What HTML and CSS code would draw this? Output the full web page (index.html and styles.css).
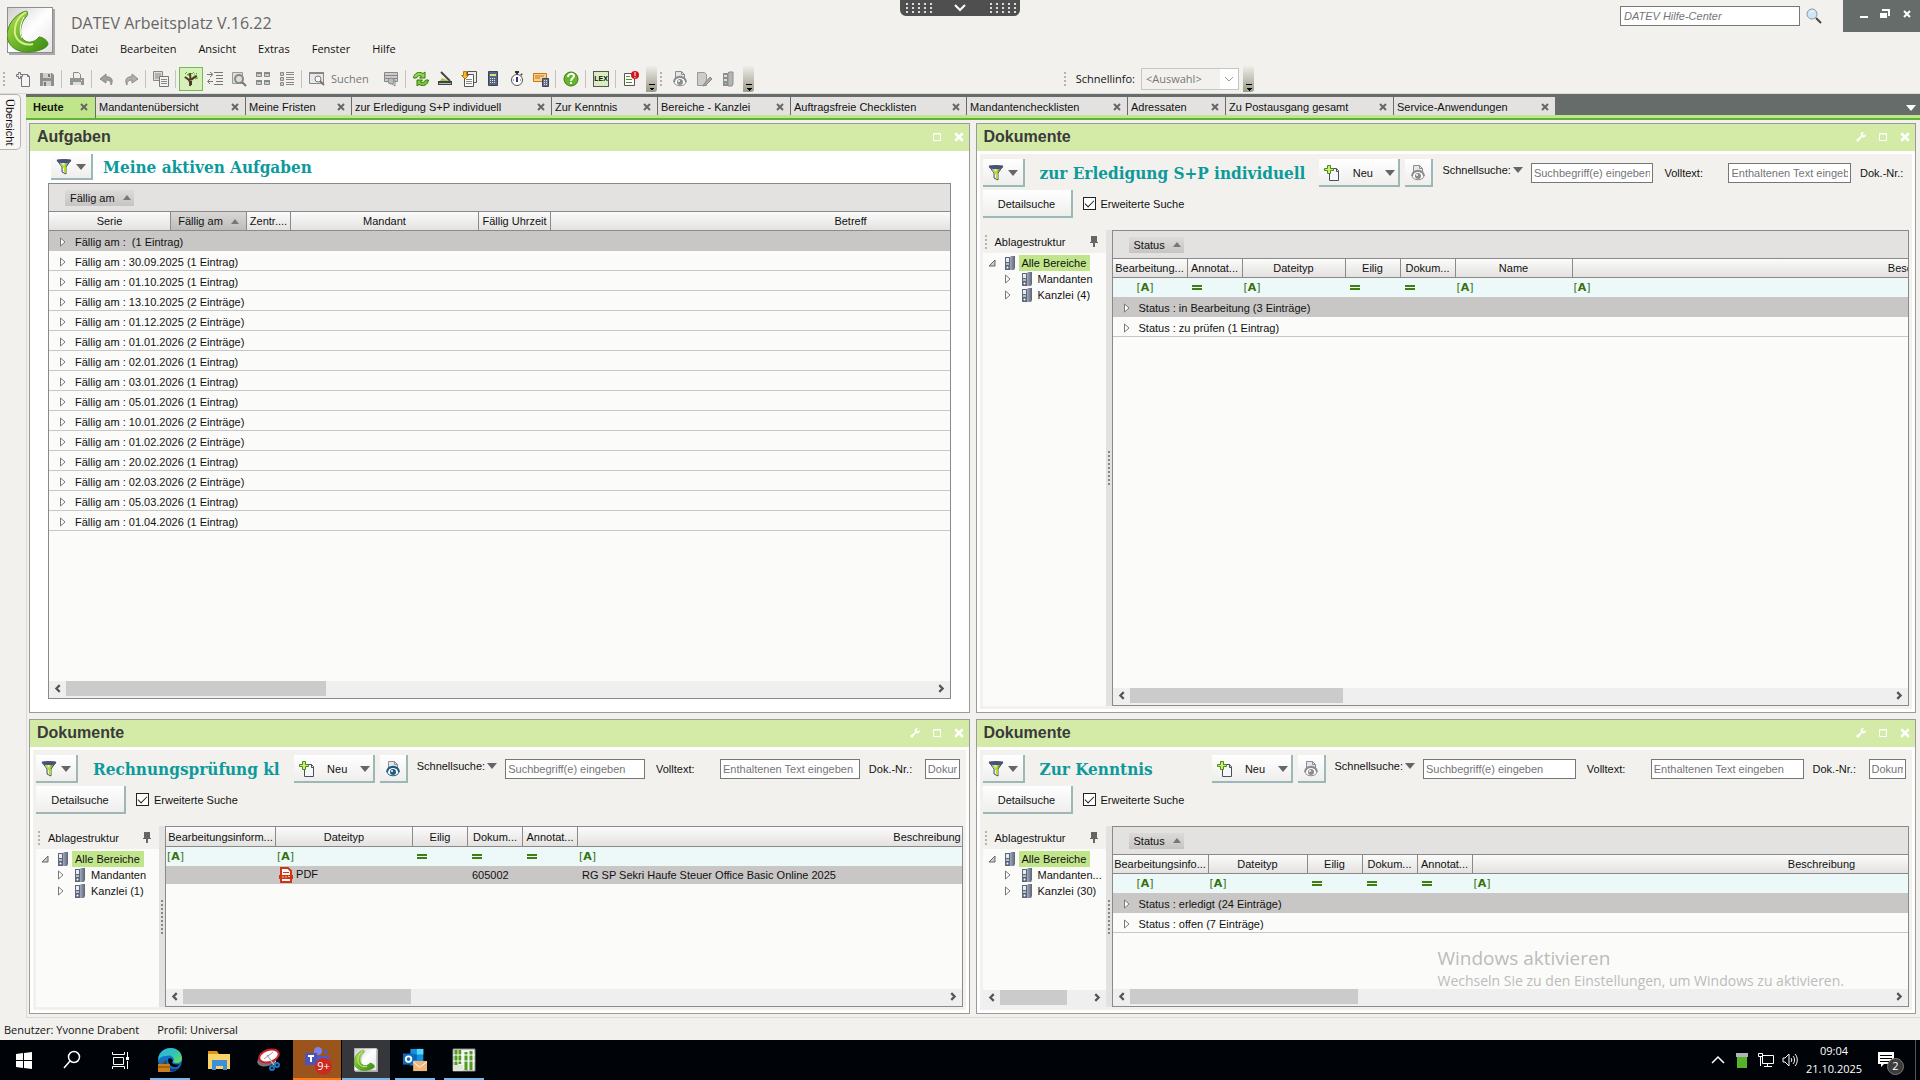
FILE: index.html
```html
<!DOCTYPE html>
<html lang="de">
<head>
    <meta charset="UTF-8">
    <meta name="viewport" content="width=device-width, initial-scale=1.0">
    <title>DATEV Arbeitsplatz V.16.22</title>
    <link rel="stylesheet" href="styles.css">
</head>
<body>
    <!-- Icon sprite -->
    <svg class="sprite" aria-hidden="true">
        <defs>
            <linearGradient id="greenGrad" x1="0" y1="0" x2="1" y2="1">
                <stop offset="0" stop-color="#b9dd52"/><stop offset="0.5" stop-color="#6db52a"/><stop offset="1" stop-color="#3c8a12"/>
            </linearGradient>
            <linearGradient id="paperGrad" x1="0" y1="0" x2="1" y2="1">
                <stop offset="0" stop-color="#cfcfcf"/><stop offset="0.5" stop-color="#ffffff"/><stop offset="1" stop-color="#e4e4e4"/>
            </linearGradient>
            <linearGradient id="funnelGrad" x1="0" y1="0" x2="1" y2="0">
                <stop offset="0" stop-color="#4c5578"/><stop offset="0.45" stop-color="#f2f4f8"/><stop offset="0.6" stop-color="#a6cf2c"/><stop offset="1" stop-color="#39424f"/>
            </linearGradient>
            <linearGradient id="binderGrad" x1="0" y1="0" x2="1" y2="0">
                <stop offset="0" stop-color="#a3abbb"/><stop offset="1" stop-color="#5b6377"/>
            </linearGradient>
            <linearGradient id="edgeGrad" x1="0" y1="0" x2="1" y2="1">
                <stop offset="0" stop-color="#2bb6e6"/><stop offset="0.5" stop-color="#2fc3b8"/><stop offset="1" stop-color="#6fe04c"/>
            </linearGradient>
        </defs>
        <symbol id="logo" viewBox="0 0 48 48">
            <rect x="2" y="2" width="46" height="46" fill="#a9a9a9"/>
            <rect x="0" y="0" width="46" height="46" fill="#8e8e8e"/>
            <rect x="1" y="1" width="44" height="44" fill="url(#paperGrad)"/>
            <path d="M19 4C8 7 0 18 0 29C1 40 11 46 23 45C33 44 40 41 41 37C41 34 36 30 32 30C29 34 23 37 18 34C11 30 13 16 19 10C21 8 21 4 19 4Z" fill="url(#greenGrad)" stroke="#3f8a16"/>
            <path d="M19 5C11 10 7 18 8 27C10 35 18 39 26 37" fill="none" stroke="#d3ee8a" stroke-width="2"/>
            <path d="M17 10C13 17 12 25 15 31" fill="none" stroke="#fff" stroke-width="1"/>
        </symbol>
        <symbol id="new" viewBox="0 0 16 16">
            <path d="M6.5 3.5h6l2 2v10h-8z" fill="#f4f4f4" stroke="#777"/><path d="M12.5 3.5v2h2" fill="none" stroke="#777"/>
            <path d="M3.5 1.5h2v2h2v2h-2v2h-2v-2h-2v-2h2z" fill="#e9e9e9" stroke="#777"/>
        </symbol>
        <symbol id="newGreen" viewBox="0 0 16 16">
            <path d="M5.500 3.500h7l2 2v10h-9z" fill="#f6f7fa" stroke="#4a4f5c"/><path d="M12.500 3.500v3h2" fill="#ccd" stroke="#4a4f5c"/>
            <path d="M3.500 0.500h3v3h3v2h-3v3h-3v-3h-3v-2h3z" fill="#cdea7a" stroke="#4b8c12"/>
        </symbol>
        <symbol id="save" viewBox="0 0 16 16">
            <path d="M1 2h12l2 2v11H1z" fill="#8f8f8f"/><path d="M4 2h8v5H4zM4 10h8v5H4z" fill="#cfcfcf"/><path d="M9 3h2v3H9zM5 11h2v4H5z" fill="#777"/>
        </symbol>
        <symbol id="print" viewBox="0 0 16 16">
            <path d="M4.500 1.500h5l2 2v4h-7z" fill="#eee" stroke="#888"/><path d="M1 7h14v7H1z" fill="#949494"/><path d="M4 11h8v3H4z" fill="#ddd"/><path d="M12 9h1v1h-1z" fill="#eee"/>
        </symbol>
        <symbol id="undo" viewBox="0 0 16 16">
            <path d="M1 8l6-5v3c5-1 8 3 5 8c0-4-2-5-5-5v3z" fill="#a0a0a0" stroke="#8a8a8a"/>
        </symbol>
        <symbol id="redo" viewBox="0 0 16 16">
            <path d="M15 8L9 3v3c-5-1-8 3-5 8c0-4 2-5 5-5v3z" fill="#b0b0b0" stroke="#8a8a8a"/>
        </symbol>
        <symbol id="copy" viewBox="0 0 16 16">
            <path d="M0.500 0.500h9v9h-9z" fill="#ddd" stroke="#888"/><path d="M2 3h6M2 5h6M2 7h6" stroke="#888"/>
            <path d="M6.500 5.500h9v10h-9z" fill="#f2f2f2" stroke="#777"/><path d="M8 8.500h6M8 10.500h6M8 12.500h6" stroke="#888"/>
        </symbol>
        <symbol id="tree" viewBox="0 0 16 16">
            <path d="M7 15c1-3 0-4-1-6L2 6M7 9c1-2 0-4 0-7M8 9c2-2 3-3 6-4M8 10V14" fill="none" stroke="#4a3a28" stroke-width="2"/>
            <path d="M2 3l2-2M5 5l1-3M9 3l2-2M11 5l3-1M1 7l2-2M12 8l3-1M8 2l1 1M13 2l1 1M4 3l1 1M11 3h1" stroke="#5bb025" stroke-width="1"/>
        </symbol>
        <symbol id="indent" viewBox="0 0 16 16">
            <path d="M7 1.500h9M9 4.500h7M9 7.500h7M9 10.500h7M7 13.500h9" stroke="#777"/><path d="M0 3.500h5M3 1l3 2.500L3 6M6 10.500H1M3 8L0.500 10.500 3 13" fill="none" stroke="#777"/>
        </symbol>
        <symbol id="docZoom" viewBox="0 0 16 16">
            <path d="M1.500 1.500h10v11h-10z" fill="#ddd" stroke="#999"/><circle cx="8" cy="8" r="4" fill="#ddd" stroke="#888" stroke-width="2"/><path d="M11 11l4 4" stroke="#777" stroke-width="2"/>
        </symbol>
        <symbol id="tiles" viewBox="0 0 16 16">
            <path d="M1.500 1.500h5v4h-5zM9.500 1.500h5v4h-5zM1.500 9.500h5v4h-5zM9.500 9.500h5v4h-5z" fill="#ccc" stroke="#888"/><path d="M1 2h6M9 2h6M1 10h6M9 10h6" stroke="#888" stroke-width="2"/>
        </symbol>
        <symbol id="listing" viewBox="0 0 16 16">
            <path d="M1.500 1.500h3v3h-3zM1.500 6.500h3v3h-3zM1.500 11.500h3v3h-3z" fill="#ccc" stroke="#888"/><path d="M7 1.500h8M7 3.500h8M7 6.500h8M7 8.500h8M7 11.500h8M7 13.500h8" stroke="#888"/>
        </symbol>
        <symbol id="find" viewBox="0 0 16 16">
            <path d="M0.500 1.500h14v11h-14z" fill="#e8e8e8" stroke="#888"/><path d="M0 2h15" stroke="#888" stroke-width="2"/><circle cx="9" cy="8" r="3" fill="#f7f7f7" stroke="#777"/><path d="M11 10l4 4" stroke="#777" stroke-width="2"/>
        </symbol>
        <symbol id="stack" viewBox="0 0 16 16">
            <path d="M1.500 1.500h13v9h-13z" fill="#ccc" stroke="#888"/><path d="M2 4.500h13M2 7.500h13" stroke="#888"/><path d="M5 10l7 5V9z" fill="#eee" stroke="#888"/><circle cx="8" cy="10" r="3" fill="#bbb" stroke="#888"/>
        </symbol>
        <symbol id="refresh" viewBox="0 0 16 16">
            <path d="M0.500 7C1 2 6 0 10 2.500l2-1.500v6H6.500l2-2C6 4 4 5 3.500 7z" fill="#9ad34b" stroke="#2f7d0d"/><path d="M15.500 9C15 14 10 16 6 13.500L4 15V9h5.500l-2 2c2.500 1 4.500 0 5-2z" fill="#7dc43a" stroke="#2f7d0d"/>
        </symbol>
        <symbol id="scanner" viewBox="0 0 16 16">
            <path d="M4 1l9 9" stroke="#444" stroke-width="2"/><path d="M1 10h14v4H1z" fill="#3f4347"/><path d="M3 10l2-3 7 3z" fill="#9c3"/><path d="M2 12.500h12" stroke="#bbb"/>
        </symbol>
        <symbol id="docsDown" viewBox="0 0 16 16">
            <path d="M6.500 0.500h9v11h-9z" fill="#eee" stroke="#555"/><path d="M3.500 3.500h9v12h-9z" fill="#fff" stroke="#555"/><path d="M5 8.500h6M5 10.500h6M5 12.500h6" stroke="#888"/><path d="M2.500 0.500h3v4h2L4 8 0.500 4.500h2z" fill="#f5b92a" stroke="#b37a0b"/>
        </symbol>
        <symbol id="calc" viewBox="0 0 16 16">
            <path d="M3.500 0.500h9v14h-9z" fill="#59657f" stroke="#3c4457"/><path d="M5 3h6v2H5z" fill="#c4e68c"/><path d="M5 7.500h6M5 9.500h6M5 11.500h6" stroke="#dfe4ee" stroke-dasharray="1 1"/>
        </symbol>
        <symbol id="watch" viewBox="0 0 16 16">
            <path d="M6 1h4M8 1v3M12 3l1 1" stroke="#333" stroke-width="2"/><circle cx="8" cy="9" r="5.500" fill="#fff" stroke="#555"/><path d="M8 6v5" stroke="#223a8a" stroke-width="2"/><path d="M4 9h1M11 9h1" stroke="#c22"/>
        </symbol>
        <symbol id="mailCalc" viewBox="0 0 16 16">
            <path d="M0.500 2.500h13v8h-13z" fill="#f8d08a" stroke="#c77a16"/><path d="M2 5h9M2 7h5" stroke="#c77a16"/><path d="M9.500 7.500h6v8h-6z" fill="#68728c" stroke="#3c4457"/><path d="M11 9.500h4M11 11.500h4M11 13.500h4" stroke="#dfe4ee" stroke-dasharray="1 1"/>
        </symbol>
        <symbol id="help" viewBox="0 0 16 16">
            <circle cx="8" cy="8" r="7" fill="#69b52c" stroke="#3c7a18"/><path d="M5 6c0-4 6-4 6-1c0 2-3 2-3 5M8 11v2" fill="none" stroke="#fff" stroke-width="2"/>
        </symbol>
        <symbol id="alertDoc" viewBox="0 0 16 16">
            <path d="M1.500 2.500h10v12h-10z" fill="#fff" stroke="#555"/><path d="M3 5.500h4M3 8.500h6M3 11.500h6" stroke="#4e9a1e"/><circle cx="12" cy="4" r="4" fill="#d4141c"/><path d="M12 1v4M12 6v1" stroke="#fff" stroke-width="1"/>
        </symbol>
        <symbol id="eye" viewBox="0 0 16 16">
            <path d="M3.500 0.500h6l3 3v6h-9z" fill="#e4e6ea" stroke="#8a8d92"/><path d="M9.500 0.500v3h3" fill="none" stroke="#8a8d92"/>
            <path d="M2 11c1-6 11-6 12 0c-1 5-11 5-12 0z" fill="#fff" stroke="currentColor"/><path d="M2 11c1-7 11-7 12 0" fill="none" stroke="currentColor" stroke-width="2"/><circle cx="8" cy="11" r="3" fill="currentColor"/><circle cx="7" cy="10" r="1" fill="#fff"/>
        </symbol>
        <symbol id="editDoc" viewBox="0 0 16 16">
            <path d="M1.500 1.500h7l2 2v11h-9z" fill="#ccc" stroke="#999"/><path d="M8 13l6-7 2 2-6 6-3 1z" fill="#aaa" stroke="#888"/>
        </symbol>
        <symbol id="binderGray" viewBox="0 0 16 16">
            <path d="M3 2h5v13H3z" fill="#8d8d8d"/><path d="M8 2l1-1h4v12l-1 2H8z" fill="#b5b5b5" stroke="#8d8d8d"/><path d="M4 4h3v2H4zM4 8h3v2H4zM5 12h1v1H5z" fill="#ddd"/>
        </symbol>
        <symbol id="binder" viewBox="0 0 12 14">
            <path d="M1 1h5v13H1z" fill="#5d677c"/><path d="M2 2h3v4H2z" fill="#e8ebf1"/><path d="M2 7h3v2H2z" fill="#b5bccb"/><circle cx="3.500" cy="11.500" r="1" fill="#fff"/>
            <path d="M6 1l1-1h4v12l-1 2H6z" fill="url(#binderGrad)"/>
        </symbol>
        <symbol id="funnel" viewBox="0 0 16 16">
            <path d="M1 1h14L10 8v7l-4-2V8z" fill="url(#funnelGrad)" stroke="#4b5268"/><ellipse cx="8" cy="2" rx="7" ry="2" fill="#46517c"/><path d="M5 5l4 4v5" fill="none" stroke="#b3dc2e" stroke-width="2"/>
        </symbol>
        <symbol id="down" viewBox="0 0 10 6"><path d="M0 0h10L5 6z" fill="#666"/></symbol>
        <symbol id="up" viewBox="0 0 10 6"><path d="M0 6h10L5 0z" fill="#777"/></symbol>
        <symbol id="closed" viewBox="0 0 6 10"><path d="M0.500 1l4.500 4-4.500 4z" fill="#fff" stroke="#777"/></symbol>
        <symbol id="opened" viewBox="0 0 8 8"><path d="M1 7h6V1z" fill="#ccc" stroke="#666"/></symbol>
        <symbol id="cross" viewBox="0 0 8 8"><path d="M1 1l6 6M7 1L1 7" stroke="currentColor" stroke-width="2"/></symbol>
        <symbol id="maxi" viewBox="0 0 10 10"><path d="M1.500 1.500h7v7h-7zM1 2h8" fill="none" stroke="#fff"/></symbol>
        <symbol id="wrench" viewBox="0 0 10 10"><path d="M0 8L5 4C4 2 5 0 8 0L6.500 2 8 3.500 10 2C10 5 8 6 6 5L2 10z" fill="#fff"/></symbol>
        <symbol id="pin" viewBox="0 0 8 11"><path d="M1 0h6v6h1v1H5v4H3V7H0V6h1z" fill="#666"/></symbol>
        <symbol id="left" viewBox="0 0 8 8"><path d="M6 1L3 4l3 3" fill="none" stroke="#555" stroke-width="2"/></symbol>
        <symbol id="right" viewBox="0 0 8 8"><path d="M2 1l3 3-3 3" fill="none" stroke="#555" stroke-width="2"/></symbol>
        <symbol id="equal" viewBox="0 0 10 6"><path d="M0 1h10M0 4h10" stroke="#3f7f12" stroke-width="2"/></symbol>
        <symbol id="pdf" viewBox="0 0 14 16">
            <path d="M2 1h7l3 3v11H2z" fill="#fff" stroke="#cf3510" stroke-width="2"/><path d="M4 5.500h6" stroke="#cf3510"/><path d="M0 8h14v4H0z" fill="#cf3510"/><path d="M4 9v2M7 9v2M9 9.500h2" stroke="#f6c4b6"/>
        </symbol>
    </svg>

    <header class="app-header">
        <svg class="logo"><use href="#logo"/></svg>
        <div class="app-heading">
            <h1 class="app-title">DATEV Arbeitsplatz V.16.22</h1>
            <nav class="menu">
                <a href="#">Datei</a>
                <a href="#">Bearbeiten</a>
                <a href="#">Ansicht</a>
                <a href="#">Extras</a>
                <a href="#">Fenster</a>
                <a href="#">Hilfe</a>
            </nav>
        </div>
        <div class="help-search">
            <input type="text" placeholder="DATEV Hilfe-Center" aria-label="DATEV Hilfe-Center">
            <button class="icon-only" aria-label="Suchen">
                <svg class="icon" viewBox="0 0 16 16"><path d="M10 10l5 5" stroke="#444" stroke-width="2"/><circle cx="6" cy="6" r="5" fill="#cfe6f5" stroke="#8a98a5"/><path d="M4 5c1-2 2-2 4-2" stroke="#fff" fill="none"/></svg>
            </button>
        </div>
        <div class="window-controls">
            <button aria-label="Minimieren"><svg viewBox="0 0 10 10"><path d="M1 8h8" stroke="#fff" stroke-width="2"/></svg></button>
            <button aria-label="Verkleinern"><svg viewBox="0 0 10 10"><path d="M0 4h7v5H0z" fill="#fff"/><path d="M3 2V1h6v5H8" fill="none" stroke="#fff" stroke-width="2"/></svg></button>
            <button aria-label="Schließen"><svg viewBox="0 0 10 10"><path d="M2 2l6 6M8 2L2 8" stroke="#fff" stroke-width="2"/></svg></button>
        </div>
        <button class="session-bar" aria-label="Sitzungsleiste">
            <span class="dots"></span>
            <svg viewBox="0 0 12 8"><path d="M1 1l5 5 5-5" fill="none" stroke="#fff" stroke-width="2"/></svg>
            <span class="dots"></span>
        </button>
    </header>

    <div class="toolbar">
        <span class="grip"></span>
        <div class="tools">
            <button class="tool" aria-label="Neu"><svg><use href="#new"/></svg></button>
            <button class="tool" aria-label="Speichern"><svg><use href="#save"/></svg></button>
            <span class="sep"></span>
            <button class="tool" aria-label="Drucken"><svg><use href="#print"/></svg></button>
            <span class="sep"></span>
            <button class="tool" aria-label="Rückgängig"><svg><use href="#undo"/></svg></button>
            <button class="tool" aria-label="Wiederholen"><svg><use href="#redo"/></svg></button>
            <span class="sep"></span>
            <button class="tool" aria-label="Kopieren"><svg><use href="#copy"/></svg></button>
            <span class="sep"></span>
            <button class="tool tool-active" aria-label="Übersicht"><svg><use href="#tree"/></svg></button>
            <button class="tool" aria-label="Einrücken"><svg><use href="#indent"/></svg></button>
            <button class="tool" aria-label="Vorschau"><svg><use href="#docZoom"/></svg></button>
            <button class="tool" aria-label="Kacheln"><svg><use href="#tiles"/></svg></button>
            <button class="tool" aria-label="Liste"><svg><use href="#listing"/></svg></button>
            <span class="sep"></span>
            <button class="tool tool-text"><svg><use href="#find"/></svg>Suchen</button>
            <button class="tool" aria-label="Suche speichern"><svg><use href="#stack"/></svg></button>
            <span class="sep"></span>
            <button class="tool" aria-label="Aktualisieren"><svg><use href="#refresh"/></svg></button>
            <button class="tool" aria-label="Scannen"><svg><use href="#scanner"/></svg></button>
            <button class="tool" aria-label="Ablegen"><svg><use href="#docsDown"/></svg></button>
            <button class="tool" aria-label="Rechner"><svg><use href="#calc"/></svg></button>
            <button class="tool" aria-label="Stoppuhr"><svg><use href="#watch"/></svg></button>
            <button class="tool" aria-label="Leistung"><svg><use href="#mailCalc"/></svg></button>
            <span class="sep"></span>
            <button class="tool" aria-label="Hilfe"><svg><use href="#help"/></svg></button>
            <span class="sep"></span>
            <button class="tool lex" aria-label="Lexinform"><span>LEX</span></button>
            <span class="sep"></span>
            <button class="tool" aria-label="Hinweise"><svg><use href="#alertDoc"/></svg></button>
        </div>
        <button class="cap" aria-label="Weitere Symbole"></button>
        <span class="grip"></span>
        <div class="tools">
            <button class="tool gray" aria-label="Ansehen"><svg><use href="#eye"/></svg></button>
            <button class="tool" aria-label="Bearbeiten"><svg><use href="#editDoc"/></svg></button>
            <button class="tool" aria-label="Ordner"><svg><use href="#binderGray"/></svg></button>
        </div>
        <button class="cap" aria-label="Weitere Symbole"></button>
        <div class="quick-info">
            <span class="grip"></span>
            <label for="quickInfo">Schnellinfo:</label>
            <div class="select-box">
                <select id="quickInfo" disabled><option>&lt;Auswahl&gt;</option></select>
                <svg viewBox="0 0 10 6"><path d="M1 1l4 4 4-4" fill="none" stroke="#999"/></svg>
            </div>
            <button class="cap" aria-label="Weitere Symbole"></button>
        </div>
    </div>

    <div class="main">
        <aside class="rail"><button class="rail-tab">Übersicht</button></aside>
        <main class="workspace">
            <nav class="tabs">
                <a class="tab tab-active" href="#">Heute<svg><use href="#cross"/></svg></a>
                <a class="tab tab-m" href="#">Mandantenübersicht<svg><use href="#cross"/></svg></a>
                <a class="tab tab-s" href="#">Meine Fristen<svg><use href="#cross"/></svg></a>
                <a class="tab tab-xl" href="#">zur Erledigung S+P individuell<svg><use href="#cross"/></svg></a>
                <a class="tab tab-s" href="#">Zur Kenntnis<svg><use href="#cross"/></svg></a>
                <a class="tab tab-n" href="#">Bereiche - Kanzlei<svg><use href="#cross"/></svg></a>
                <a class="tab tab-l" href="#">Auftragsfreie Checklisten<svg><use href="#cross"/></svg></a>
                <a class="tab tab-w" href="#">Mandantenchecklisten<svg><use href="#cross"/></svg></a>
                <a class="tab tab-xs" href="#">Adressaten<svg><use href="#cross"/></svg></a>
                <a class="tab tab-l2" href="#">Zu Postausgang gesamt<svg><use href="#cross"/></svg></a>
                <a class="tab tab-w tab-last" href="#">Service-Anwendungen<svg><use href="#cross"/></svg></a>
                <button class="tab-more" aria-label="Weitere Register"><svg viewBox="0 0 10 6"><path d="M0 0h10L5 6z" fill="#fff"/></svg></button>
            </nav>

            <div class="panels">
                <!-- Aufgaben -->
                <section class="panel">
                    <header class="panel-bar">
                        <h2>Aufgaben</h2>
                        <button aria-label="Maximieren"><svg><use href="#maxi"/></svg></button>
                        <button aria-label="Schließen"><svg><use href="#cross"/></svg></button>
                    </header>
                    <div class="tasks">
                        <div class="tasks-head">
                            <button class="btn btn-flat" aria-label="Filter"><svg class="icon"><use href="#funnel"/></svg><svg class="arrow"><use href="#down"/></svg></button>
                            <h3>Meine aktiven Aufgaben</h3>
                        </div>
                        <div class="grid-box">
                            <div class="group-bar"><button class="chip">Fällig am<svg><use href="#up"/></svg></button></div>
                            <div class="grid-body">
                                <table class="grid tasks-grid">
                                    <colgroup><col class="c122"><col class="c76"><col class="c44"><col class="c188"><col class="c72"><col class="c600"></colgroup>
                                    <thead>
                                        <tr><th>Serie</th><th class="sorted">Fällig am<svg><use href="#up"/></svg></th><th>Zentr....</th><th>Mandant</th><th>Fällig Uhrzeit</th><th>Betreff</th></tr>
                                    </thead>
                                    <tbody>
                                        <tr class="group selected"><td colspan="6"><svg><use href="#closed"/></svg>Fällig am :&nbsp; (1 Eintrag)</td></tr>
                                        <tr class="group"><td colspan="6"><svg><use href="#closed"/></svg>Fällig am : 30.09.2025 (1 Eintrag)</td></tr>
                                        <tr class="group"><td colspan="6"><svg><use href="#closed"/></svg>Fällig am : 01.10.2025 (1 Eintrag)</td></tr>
                                        <tr class="group"><td colspan="6"><svg><use href="#closed"/></svg>Fällig am : 13.10.2025 (2 Einträge)</td></tr>
                                        <tr class="group"><td colspan="6"><svg><use href="#closed"/></svg>Fällig am : 01.12.2025 (2 Einträge)</td></tr>
                                        <tr class="group"><td colspan="6"><svg><use href="#closed"/></svg>Fällig am : 01.01.2026 (2 Einträge)</td></tr>
                                        <tr class="group"><td colspan="6"><svg><use href="#closed"/></svg>Fällig am : 02.01.2026 (1 Eintrag)</td></tr>
                                        <tr class="group"><td colspan="6"><svg><use href="#closed"/></svg>Fällig am : 03.01.2026 (1 Eintrag)</td></tr>
                                        <tr class="group"><td colspan="6"><svg><use href="#closed"/></svg>Fällig am : 05.01.2026 (1 Eintrag)</td></tr>
                                        <tr class="group"><td colspan="6"><svg><use href="#closed"/></svg>Fällig am : 10.01.2026 (2 Einträge)</td></tr>
                                        <tr class="group"><td colspan="6"><svg><use href="#closed"/></svg>Fällig am : 01.02.2026 (2 Einträge)</td></tr>
                                        <tr class="group"><td colspan="6"><svg><use href="#closed"/></svg>Fällig am : 20.02.2026 (1 Eintrag)</td></tr>
                                        <tr class="group"><td colspan="6"><svg><use href="#closed"/></svg>Fällig am : 02.03.2026 (2 Einträge)</td></tr>
                                        <tr class="group"><td colspan="6"><svg><use href="#closed"/></svg>Fällig am : 05.03.2026 (1 Eintrag)</td></tr>
                                        <tr class="group"><td colspan="6"><svg><use href="#closed"/></svg>Fällig am : 01.04.2026 (1 Eintrag)</td></tr>
                                    </tbody>
                                </table>
                            </div>
                            <div class="scrollbar"><svg><use href="#left"/></svg><div class="track"><div class="thumb thumb-tasks"></div></div><svg><use href="#right"/></svg></div>
                        </div>
                    </div>
                </section>

                <!-- Dokumente: zur Erledigung -->
                <section class="panel">
                    <header class="panel-bar">
                        <h2>Dokumente</h2>
                        <button aria-label="Einstellungen"><svg><use href="#wrench"/></svg></button>
                        <button aria-label="Maximieren"><svg><use href="#maxi"/></svg></button>
                        <button aria-label="Schließen"><svg><use href="#cross"/></svg></button>
                    </header>
                    <div class="docs">
                        <div class="search-row search-cut">
                            <button class="btn" aria-label="Filter"><svg class="icon"><use href="#funnel"/></svg><svg class="arrow"><use href="#down"/></svg></button>
                            <h3>zur Erledigung S+P individuell</h3>
                            <button class="btn btn-new"><svg class="icon"><use href="#newGreen"/></svg>Neu<svg class="arrow"><use href="#down"/></svg></button>
                            <button class="btn btn-eye gray" aria-label="Ansehen"><svg class="icon"><use href="#eye"/></svg></button>
                            <label class="quick-label" for="quick2">Schnellsuche: <svg class="arrow"><use href="#down"/></svg></label>
                            <input class="field" id="quick2" type="text" placeholder="Suchbegriff(e) eingeben">
                            <label class="full-label" for="full2">Volltext:</label>
                            <input class="field" id="full2" type="text" placeholder="Enthaltenen Text eingeben">
                            <span class="doc-label">Dok.-Nr.:</span>
                        </div>
                        <div class="detail-row">
                            <button class="btn btn-detail">Detailsuche</button>
                            <label class="check"><input type="checkbox" checked>Erweiterte Suche</label>
                        </div>
                        <div class="doc-body">
                            <aside class="filing">
                                <div class="filing-head"><span class="grip"></span>Ablagestruktur<svg><use href="#pin"/></svg></div>
                                <ul class="filing-tree">
                                    <li><svg class="twist"><use href="#opened"/></svg><svg class="binder"><use href="#binder"/></svg><span class="current">Alle Bereiche</span></li>
                                    <li class="child"><svg class="twist"><use href="#closed"/></svg><svg class="binder"><use href="#binder"/></svg><span>Mandanten</span></li>
                                    <li class="child"><svg class="twist"><use href="#closed"/></svg><svg class="binder"><use href="#binder"/></svg><span>Kanzlei (4)</span></li>
                                </ul>
                            </aside>
                            <div class="splitter"></div>
                            <div class="grid-box">
                                <div class="group-bar"><button class="chip">Status<svg><use href="#up"/></svg></button></div>
                                <div class="grid-body">
                                    <table class="grid open-grid">
                                        <colgroup><col class="c75"><col class="c55"><col class="c103"><col class="c55"><col class="c55"><col class="c117"><col class="c699"></colgroup>
                                        <thead>
                                            <tr><th>Bearbeitung...</th><th>Annotat...</th><th>Dateityp</th><th>Eilig</th><th>Dokum...</th><th>Name</th><th>Beschreibung</th></tr>
                                        </thead>
                                        <tbody>
                                            <tr class="filter indent"><td>[<b>A</b>]</td><td><svg><use href="#equal"/></svg></td><td>[<b>A</b>]</td><td><svg><use href="#equal"/></svg></td><td><svg><use href="#equal"/></svg></td><td>[<b>A</b>]</td><td>[<b>A</b>]</td></tr>
                                            <tr class="group selected"><td colspan="7"><svg><use href="#closed"/></svg>Status : in Bearbeitung (3 Einträge)</td></tr>
                                            <tr class="group"><td colspan="7"><svg><use href="#closed"/></svg>Status : zu prüfen (1 Eintrag)</td></tr>
                                        </tbody>
                                    </table>
                                </div>
                                <div class="scrollbar"><svg><use href="#left"/></svg><div class="track"><div class="thumb thumb-open"></div></div><svg><use href="#right"/></svg></div>
                            </div>
                        </div>
                    </div>
                </section>

                <!-- Dokumente: Rechnungsprüfung -->
                <section class="panel">
                    <header class="panel-bar">
                        <h2>Dokumente</h2>
                        <button aria-label="Einstellungen"><svg><use href="#wrench"/></svg></button>
                        <button aria-label="Maximieren"><svg><use href="#maxi"/></svg></button>
                        <button aria-label="Schließen"><svg><use href="#cross"/></svg></button>
                    </header>
                    <div class="docs">
                        <div class="search-row">
                            <button class="btn" aria-label="Filter"><svg class="icon"><use href="#funnel"/></svg><svg class="arrow"><use href="#down"/></svg></button>
                            <h3>Rechnungsprüfung kl</h3>
                            <button class="btn btn-new"><svg class="icon"><use href="#newGreen"/></svg>Neu<svg class="arrow"><use href="#down"/></svg></button>
                            <button class="btn btn-eye" aria-label="Ansehen"><svg class="icon"><use href="#eye"/></svg></button>
                            <label class="quick-label" for="quick3">Schnellsuche: <svg class="arrow"><use href="#down"/></svg></label>
                            <input class="field" id="quick3" type="text" placeholder="Suchbegriff(e) eingeben">
                            <label class="full-label" for="full3">Volltext:</label>
                            <input class="field" id="full3" type="text" placeholder="Enthaltenen Text eingeben">
                            <label class="doc-label" for="doc3">Dok.-Nr.:</label>
                            <input class="field field-doc" id="doc3" type="text" placeholder="Dokumentnummer">
                        </div>
                        <div class="detail-row">
                            <button class="btn btn-detail">Detailsuche</button>
                            <label class="check"><input type="checkbox" checked>Erweiterte Suche</label>
                        </div>
                        <div class="doc-body">
                            <aside class="filing">
                                <div class="filing-head"><span class="grip"></span>Ablagestruktur<svg><use href="#pin"/></svg></div>
                                <ul class="filing-tree">
                                    <li><svg class="twist"><use href="#opened"/></svg><svg class="binder"><use href="#binder"/></svg><span class="current">Alle Bereiche</span></li>
                                    <li class="child"><svg class="twist"><use href="#closed"/></svg><svg class="binder"><use href="#binder"/></svg><span>Mandanten</span></li>
                                    <li class="child"><svg class="twist"><use href="#closed"/></svg><svg class="binder"><use href="#binder"/></svg><span>Kanzlei (1)</span></li>
                                </ul>
                            </aside>
                            <div class="splitter"></div>
                            <div class="grid-box">
                                <div class="grid-body">
                                    <table class="grid check-grid">
                                        <colgroup><col class="c110"><col class="c137"><col class="c55"><col class="c55"><col class="c55"><col class="c699"></colgroup>
                                        <thead>
                                            <tr><th>Bearbeitungsinform...</th><th>Dateityp</th><th>Eilig</th><th>Dokum...</th><th>Annotat...</th><th>Beschreibung</th></tr>
                                        </thead>
                                        <tbody>
                                            <tr class="filter"><td>[<b>A</b>]</td><td>[<b>A</b>]</td><td><svg><use href="#equal"/></svg></td><td><svg><use href="#equal"/></svg></td><td><svg><use href="#equal"/></svg></td><td>[<b>A</b>]</td></tr>
                                            <tr class="entry selected"><td></td><td><svg><use href="#pdf"/></svg> PDF</td><td></td><td>605002</td><td></td><td>RG SP Sekri Haufe Steuer Office Basic Online 2025</td></tr>
                                        </tbody>
                                    </table>
                                </div>
                                <div class="scrollbar"><svg><use href="#left"/></svg><div class="track"><div class="thumb"></div></div><svg><use href="#right"/></svg></div>
                            </div>
                        </div>
                    </div>
                </section>

                <!-- Dokumente: Zur Kenntnis -->
                <section class="panel">
                    <header class="panel-bar">
                        <h2>Dokumente</h2>
                        <button aria-label="Einstellungen"><svg><use href="#wrench"/></svg></button>
                        <button aria-label="Maximieren"><svg><use href="#maxi"/></svg></button>
                        <button aria-label="Schließen"><svg><use href="#cross"/></svg></button>
                    </header>
                    <div class="docs">
                        <div class="search-row">
                            <button class="btn" aria-label="Filter"><svg class="icon"><use href="#funnel"/></svg><svg class="arrow"><use href="#down"/></svg></button>
                            <h3>Zur Kenntnis</h3>
                            <button class="btn btn-new"><svg class="icon"><use href="#newGreen"/></svg>Neu<svg class="arrow"><use href="#down"/></svg></button>
                            <button class="btn btn-eye gray" aria-label="Ansehen"><svg class="icon"><use href="#eye"/></svg></button>
                            <label class="quick-label" for="quick4">Schnellsuche: <svg class="arrow"><use href="#down"/></svg></label>
                            <input class="field" id="quick4" type="text" placeholder="Suchbegriff(e) eingeben">
                            <label class="full-label" for="full4">Volltext:</label>
                            <input class="field" id="full4" type="text" placeholder="Enthaltenen Text eingeben">
                            <label class="doc-label" for="doc4">Dok.-Nr.:</label>
                            <input class="field field-doc" id="doc4" type="text" placeholder="Dokumentnummer">
                        </div>
                        <div class="detail-row">
                            <button class="btn btn-detail">Detailsuche</button>
                            <label class="check"><input type="checkbox" checked>Erweiterte Suche</label>
                        </div>
                        <div class="doc-body">
                            <aside class="filing">
                                <div class="filing-head"><span class="grip"></span>Ablagestruktur<svg><use href="#pin"/></svg></div>
                                <ul class="filing-tree">
                                    <li><svg class="twist"><use href="#opened"/></svg><svg class="binder"><use href="#binder"/></svg><span class="current">Alle Bereiche</span></li>
                                    <li class="child"><svg class="twist"><use href="#closed"/></svg><svg class="binder"><use href="#binder"/></svg><span>Mandanten...</span></li>
                                    <li class="child"><svg class="twist"><use href="#closed"/></svg><svg class="binder"><use href="#binder"/></svg><span>Kanzlei (30)</span></li>
                                </ul>
                                <div class="scrollbar"><svg><use href="#left"/></svg><div class="track"><div class="thumb thumb-tree"></div></div><svg><use href="#right"/></svg></div>
                            </aside>
                            <div class="splitter"></div>
                            <div class="grid-box">
                                <div class="group-bar"><button class="chip">Status<svg><use href="#up"/></svg></button></div>
                                <div class="grid-body">
                                    <table class="grid info-grid">
                                        <colgroup><col class="c96"><col class="c99"><col class="c55"><col class="c55"><col class="c55"><col class="c699"></colgroup>
                                        <thead>
                                            <tr><th>Bearbeitungsinfo...</th><th>Dateityp</th><th>Eilig</th><th>Dokum...</th><th>Annotat...</th><th>Beschreibung</th></tr>
                                        </thead>
                                        <tbody>
                                            <tr class="filter indent"><td>[<b>A</b>]</td><td>[<b>A</b>]</td><td><svg><use href="#equal"/></svg></td><td><svg><use href="#equal"/></svg></td><td><svg><use href="#equal"/></svg></td><td>[<b>A</b>]</td></tr>
                                            <tr class="group selected"><td colspan="6"><svg><use href="#closed"/></svg>Status : erledigt (24 Einträge)</td></tr>
                                            <tr class="group"><td colspan="6"><svg><use href="#closed"/></svg>Status : offen (7 Einträge)</td></tr>
                                        </tbody>
                                    </table>
                                </div>
                                <div class="scrollbar"><svg><use href="#left"/></svg><div class="track"><div class="thumb"></div></div><svg><use href="#right"/></svg></div>
                            </div>
                        </div>
                    </div>
                </section>
            </div>
        </main>
    </div>

    <footer class="status">
        <span>Benutzer: Yvonne Drabent</span>
        <span>Profil: Universal</span>
    </footer>

    <div class="taskbar">
        <div class="start">
            <button class="task" aria-label="Start"><svg viewBox="0 0 24 24"><path d="M4 6l7-1v7H4zM12 5l8-1v8h-8zM4 13h7v7l-7-1zM12 13h8v8l-8-1z" fill="#fff"/></svg></button>
            <button class="task" aria-label="Suche"><svg viewBox="0 0 24 24"><circle cx="14" cy="9" r="5.500" fill="none" stroke="#fff" stroke-width="1.500"/><path d="M10 13l-6 7" stroke="#fff" stroke-width="1.500"/></svg></button>
            <button class="task" aria-label="Aktive Anwendungen"><svg viewBox="0 0 24 24"><path d="M5.500 9.500h10v7h-10zM4.500 4v2.500h12V4M4.500 21v-2.500h12V21M19.500 4v5M19.500 13v8" fill="none" stroke="#fff"/><path d="M18 9h3v3h-3z" fill="#fff"/></svg></button>
        </div>
        <button class="task running" aria-label="Edge">
            <svg viewBox="0 0 24 24"><circle cx="12" cy="12" r="12" fill="#1373c4"/><path d="M0 12C1-3 23-4 24 10c0 5-5 6-9 4c3-4-2-8-7-6C4 8 1 10 0 12z" fill="url(#edgeGrad)"/><path d="M9 12c-2 5 3 11 12 8c-4 5-13 4-15-2c-1-3 0-5 3-6z" fill="#0b3f8c"/><path d="M10 11c3-2 6 1 4 4c3 2 7 2 9 0l-4 4c-6 1-9-3-9-8z" fill="#000308"/><rect y="16" width="12" height="8" fill="#c97f1d"/><path d="M4 16v-2h4v2M0 19h12" stroke="#7b470b" fill="none"/></svg>
        </button>
        <button class="task" aria-label="Explorer">
            <svg viewBox="0 0 24 24"><path d="M1 3h9l2 3H1z" fill="#e0940c"/><path d="M1 6h22v15H1z" fill="#fbd268"/><path d="M5 12h15v10h-4v-4H9v4H5z" fill="#3d8fd6"/></svg>
        </button>
        <button class="task" aria-label="Snipping Tool">
            <svg viewBox="0 0 24 24"><ellipse cx="11" cy="12" rx="10" ry="6" transform="rotate(-18 11 12)" fill="#777"/><ellipse cx="13" cy="8" rx="10" ry="6" transform="rotate(-18 13 8)" fill="#fff" stroke="#d3202a" stroke-width="2"/><path d="M8 11l9-7M11 7l6 8" stroke="#999"/><path d="M13 11l7 8M20 13l-5 6" stroke="#ddd"/><circle cx="16" cy="20" r="2" fill="none" stroke="#1e78c2" stroke-width="2"/><circle cx="21" cy="17" r="2" fill="none" stroke="#1e78c2" stroke-width="2"/></svg>
        </button>
        <button class="task teams" aria-label="Teams">
            <svg viewBox="0 0 24 24"><circle cx="13" cy="4" r="4" fill="#7b83eb"/><circle cx="21" cy="5" r="2" fill="#5059c9"/><path d="M9 9h15v8c-2 5-13 6-15 0z" fill="#5059c9"/><path d="M0 6h12v12H0z" fill="#4b53bc"/><path d="M3 9h6M6 9v6" stroke="#fff" stroke-width="2"/></svg>
            <span class="badge">9+</span>
        </button>
        <button class="task running current-app" aria-label="DATEV"><svg><use href="#logo"/></svg></button>
        <button class="task running" aria-label="Outlook">
            <svg viewBox="0 0 26 26"><path d="M8 1h14v18H8z" fill="#1490df"/><path d="M15 1h7v6h-7z" fill="#50d9ff"/><path d="M8 7h7v6H8z" fill="#0364b8"/><path d="M0 6h12v12H0z" fill="#0f6cbd"/><circle cx="6" cy="12" r="3" fill="none" stroke="#fff" stroke-width="2"/><path d="M11 14h15v11H11z" fill="#f1b77a"/><path d="M11 15l7 6 8-6" fill="none" stroke="#fff"/></svg>
        </button>
        <button class="task running" aria-label="DATEV Rechnungswesen">
            <svg viewBox="0 0 24 24"><path d="M1 1h22v22H1z" fill="#f1f1ee" stroke="#888"/><path d="M4 2v20M8 2v14M14 4v18M19 3v19" stroke="#4f9a20" stroke-width="3"/><path d="M1 7h22M1 13h22M10 2v20" stroke="#fff"/><path d="M1 17h10v6H1z" fill="#dfe7d6"/></svg>
        </button>
        <div class="tray">
            <svg viewBox="0 0 16 16"><path d="M2 11l6-6 6 6" fill="none" stroke="#fff" stroke-width="1.500"/></svg>
            <svg viewBox="0 0 16 16"><path d="M3 4h10v12H3z" fill="#58b327"/><path d="M2 1h12v4H2z" fill="#aeb3bf"/></svg>
            <svg viewBox="0 0 16 16"><path d="M4.500 3.500h11v8h-11zM9.500 12v3M6 14.500h8M0.500 1.500h4v3h-4zM2.500 5v9" fill="none" stroke="#fff"/></svg>
            <svg viewBox="0 0 16 16"><path d="M1 6h2l4-4v12l-4-4H1zM9 6c1 1 1 3 0 4M11 4c2 2 2 6 0 8M13 2c3 3 3 9 0 12" fill="none" stroke="#fff"/></svg>
            <div class="clock"><span>09:04</span><span>21.10.2025</span></div>
            <button class="notes" aria-label="Benachrichtigungen">
                <svg viewBox="0 0 16 16"><path d="M0 0h16v12H6l-3 3v-3H0z" fill="#fff"/><path d="M2 3.500h12M2 6.500h12M2 9.500h9" stroke="#000"/></svg>
                <span class="count">2</span>
            </button>
        </div>
    </div>

    <div class="watermark">
        <p class="watermark-title">Windows aktivieren</p>
        <p>Wechseln Sie zu den Einstellungen, um Windows zu aktivieren.</p>
    </div>
</body>
</html>
```
FILE: styles.css
```css
* {
    box-sizing: border-box;
}

body {
    margin: 0;
    display: flex;
    flex-direction: column;
    height: 100vh;
    overflow: hidden;
    position: relative;
    background-color: #f3f1ee;
    color: #111;
    font-family: "Liberation Sans", Arial, sans-serif;
    font-size: 11px;
}

button, input, select {
    font: inherit;
    color: inherit;
}

button {
    padding: 0;
    border: none;
    background: none;
}

h1, h2, h3, p, ul {
    margin: 0;
    padding: 0;
}

a {
    color: inherit;
    text-decoration: none;
}

svg {
    display: block;
    flex: none;
}

.sprite {
    position: absolute;
    width: 0;
    height: 0;
}

.icon {
    width: 16px;
    height: 16px;
}

.arrow {
    width: 10px;
    height: 6px;
}

.gray {
    color: #8c8c8c;
}

.grip {
    width: 2px;
    height: 14px;
    background: repeating-linear-gradient(#b5b3b0 0 2px, transparent 2px 4px);
}

/* Header */
.app-header {
    display: flex;
    position: relative;
    height: 64px;
    padding-left: 7px;
}

.logo {
    width: 48px;
    height: 48px;
    margin-top: 7px;
}

.app-heading {
    flex: 1;
    margin-left: 16px;
    padding-top: 12px;
    font-family: "Open Sans", "Noto Sans", sans-serif;
}

.app-title {
    color: #666;
    font-size: 16px;
    font-weight: normal;
    line-height: 22px;
}

.menu {
    display: flex;
    gap: 22px;
    padding-top: 6px;
    line-height: 18px;
}

.help-search {
    display: flex;
    align-items: center;
    gap: 6px;
    height: 32px;
    margin-right: 21px;
}

.help-search input {
    width: 180px;
    height: 20px;
    padding: 0 3px;
    border: 1px solid #777;
    background: #fff;
    font-style: italic;
}

input::placeholder {
    color: #757575;
    opacity: 1;
}

.window-controls {
    display: flex;
    align-items: center;
    justify-content: space-around;
    width: 77px;
    height: 32px;
    padding: 0 2px 4px 10px;
    background: #656c69;
}

.window-controls svg {
    width: 10px;
    height: 10px;
}

/* Handle of the remote session, lies over the header */
.session-bar {
    position: absolute;
    top: 0;
    left: 50%;
    transform: translateX(-50%);
    display: flex;
    align-items: center;
    justify-content: space-between;
    width: 120px;
    height: 16px;
    padding: 0 4px;
    border-radius: 0 0 6px 6px;
    background: #4f4f4f;
}

.session-bar svg {
    width: 12px;
    height: 8px;
}

.dots {
    width: 28px;
    height: 12px;
    background: radial-gradient(#ddd 1px, transparent 1px) 0 0 / 6px 4px;
}

/* Toolbar */
.toolbar {
    display: flex;
    align-items: center;
    height: 29px;
    padding-left: 3px;
}

.tools {
    display: flex;
    align-items: center;
    margin: 0 3px 0 6px;
}

.tool {
    display: flex;
    align-items: center;
    justify-content: center;
    width: 24px;
    height: 24px;
}

.tool svg {
    width: 16px;
    height: 16px;
}

.tool-active {
    border: 1px solid #6cc04a;
    background: #d9efbb;
}

.tool-text {
    justify-content: flex-start;
    gap: 6px;
    width: 74px;
    padding-left: 4px;
    color: #777;
    font-family: "Open Sans", "Noto Sans", sans-serif;
    font-size: 11px;
}

.lex span {
    width: 16px;
    height: 16px;
    border: 1px solid #555;
    background: #d8edc0;
    font-size: 7px;
    font-weight: bold;
    line-height: 14px;
}

.sep {
    width: 2px;
    height: 18px;
    margin: 0 2px;
    border-left: 1px solid #c5c3c0;
}

.cap {
    width: 11px;
    height: 26px;
    margin-right: 3px;
    border-radius: 0 3px 3px 0;
    background: linear-gradient(#eeedea, #9a9a86);
}

.cap::after {
    content: "";
    display: block;
    width: 6px;
    height: 6px;
    margin: 17px auto 0;
    border-top: 1px solid #000;
    background: conic-gradient(from -45deg at 50% 100%, #000 90deg, transparent 0) bottom / 6px 3px no-repeat;
}

.quick-info {
    display: flex;
    align-items: center;
    gap: 4px;
    margin-left: auto;
    margin-right: 666px;
    font-family: "Open Sans", "Noto Sans", sans-serif;
}

.quick-info label {
    margin: 0 2px 0 6px;
}

.select-box {
    position: relative;
}

.select-box select {
    width: 98px;
    height: 22px;
    padding: 0 4px;
    appearance: none;
    border: 1px solid #c8c6c3;
    border-radius: 0;
    background: #fff linear-gradient(#f3f1ee, #f3f1ee) left / 78px 100% no-repeat;
    color: #777;
    opacity: 1;
}

.select-box svg {
    position: absolute;
    top: 8px;
    right: 5px;
    width: 10px;
    height: 6px;
}

.quick-info .cap {
    margin-right: 0;
}

/* Workspace */
.main {
    flex: 1;
    display: flex;
    min-height: 0;
    border-top: 1px solid #dcdbd8;
}

.rail {
    width: 26px;
}

.rail-tab {
    width: 21px;
    height: 56px;
    border: 1px solid #b5b3b0;
    border-left: none;
    border-radius: 0 5px 5px 0;
    background: #f8f7f5;
    writing-mode: vertical-rl;
}

.workspace {
    flex: 1;
    display: flex;
    flex-direction: column;
    min-width: 0;
    border-bottom: 1px solid #dcdbd8;
}

.tabs {
    display: flex;
    height: 26px;
    padding-top: 3px;
    border-bottom: 2px solid #5fb336;
    background: linear-gradient(#656c69 0 21px, #c1e58b 21px);
}

.tab {
    display: flex;
    align-items: center;
    justify-content: space-between;
    width: 108px;
    height: 18px;
    padding: 1px 6px 0 3px;
    border-right: 1px solid #656c69;
    background: #e3e2e0;
    white-space: nowrap;
}

.tab svg {
    width: 8px;
    height: 8px;
    color: #666;
}

.tab-active {
    width: 70px;
    height: 21px;
    padding: 0 7px 1px;
    background: #c1e58b;
    font-weight: bold;
}

.tab-xs { width: 98px; }
.tab-s { width: 106px; }
.tab-n { width: 133px; }
.tab-m { width: 150px; }
.tab-w { width: 161px; }
.tab-l2 { width: 168px; }
.tab-l { width: 176px; }
.tab-xl { width: 200px; }

.tab-last {
    border-right: none;
}

.tab-more {
    margin-left: auto;
    padding-right: 4px;
}

.tab-more svg {
    width: 10px;
    height: 6px;
}

.panels {
    flex: 1;
    display: grid;
    grid-template-columns: minmax(0, 1fr) minmax(0, 1fr);
    grid-template-rows: minmax(0, 2fr) minmax(0, 1fr);
    gap: 6px;
    min-height: 0;
    padding: 3px 4px 3px 2px;
    border-left: 1px solid #dcdbd8;
}

.panel {
    display: flex;
    flex-direction: column;
    border: 1px solid #9a9a9a;
    background: #fff;
}

.panel-bar {
    display: flex;
    align-items: center;
    gap: 12px;
    height: 27px;
    padding: 0 5px 2px 7px;
    background: #d4eba7;
}

.panel-bar h2 {
    flex: 1;
    color: #3a3a3a;
    font-size: 16px;
    line-height: 20px;
}

.panel-bar svg {
    width: 10px;
    height: 10px;
    color: #fff;
}

h3 {
    color: #0c9a9b;
    font-family: "DejaVu Serif Condensed", "DejaVu Serif", serif;
    font-size: 17px;
    font-weight: bold;
    line-height: 24px;
    white-space: nowrap;
}

/* Buttons */
.btn {
    display: flex;
    align-items: center;
    justify-content: space-between;
    flex: none;
    width: 42px;
    height: 28px;
    padding: 2px 5px 0;
    border-right: 2px solid #9bb8b7;
    border-bottom: 2px solid #9bb8b7;
    background: linear-gradient(#fff, #efeeed);
}

.btn-new {
    width: 81px;
    padding-right: 3px;
}

.btn-eye {
    justify-content: center;
    width: 28px;
    color: #1f5c80;
}

.btn-eye.gray {
    color: #8c8c8c;
}

.btn-detail {
    justify-content: center;
    width: 90px;
}

/* Aufgaben */
.tasks {
    flex: 1;
    display: flex;
    flex-direction: column;
    min-height: 0;
    padding: 0 18px 13px;
}

.tasks-head {
    display: flex;
    align-items: center;
    gap: 10px;
    height: 32px;
    padding-left: 3px;
}

.btn-flat {
    height: 26px;
}

/* Dokumente */
.docs {
    flex: 1;
    display: flex;
    flex-direction: column;
    min-height: 0;
    margin: 3px;
    padding: 5px 3px 3px;
    background: #f3f1ee;
}

.search-row {
    display: flex;
    align-items: center;
    height: 28px;
    padding-right: 3px;
}

.search-row h3 {
    min-width: 158px;
    margin: 0 14px 0 15px;
}

.search-cut {
    padding-right: 0;
}

.search-row .btn-eye {
    margin-left: 5px;
}

.quick-label {
    display: flex;
    align-items: center;
    gap: 2px;
    flex: none;
    margin: 0 8px 0 9px;
    padding-bottom: 6px;
}

.field {
    flex: 14 1 0;
    min-width: 0;
    height: 20px;
    padding: 0 2px;
    border: 1px solid #777;
    background: #fff;
}

.field-doc {
    flex-grow: 3;
}

.full-label {
    flex: none;
    width: 64px;
    margin-left: 11px;
}

.doc-label {
    flex: none;
    width: 56px;
    margin-left: 9px;
}

.search-cut .doc-label {
    width: 49px;
}

.detail-row {
    display: flex;
    align-items: center;
    gap: 10px;
    height: 28px;
    margin-top: 3px;
}

.check {
    display: flex;
    align-items: center;
    gap: 5px;
    padding-bottom: 1px;
}

.check input {
    appearance: none;
    width: 13px;
    height: 13px;
    margin: 0;
    border: 1px solid #222;
    background: #fff;
}

.check input:checked::before {
    content: "";
    display: block;
    width: 8px;
    height: 4px;
    margin: 2px 1px;
    border-left: 1px solid #222;
    border-bottom: 1px solid #222;
    transform: rotate(-45deg);
}

.doc-body {
    flex: 1;
    display: flex;
    min-height: 0;
    margin-top: 12px;
}

.filing {
    display: flex;
    flex-direction: column;
    width: 123px;
}

.filing-head {
    display: flex;
    align-items: center;
    gap: 8px;
    height: 23px;
    padding: 0 8px 0 2px;
}

.filing-head svg {
    width: 8px;
    height: 11px;
    margin-left: auto;
}

.filing-tree {
    flex: 1;
    padding-top: 2px;
    background: #fbfbf9;
    list-style: none;
}

.filing-tree li {
    display: flex;
    align-items: center;
    height: 16px;
    padding-left: 5px;
    white-space: nowrap;
}

.filing-tree .child {
    padding-left: 22px;
}

.filing-tree span {
    padding: 0 3px;
    line-height: 16px;
}

.filing-tree .current {
    padding: 0 4px 0 3px;
    background: #c1e58b;
}

.twist {
    width: 8px;
    height: 8px;
    margin-right: 8px;
}

.child .twist {
    width: 6px;
    height: 10px;
    margin-right: 10px;
}

.binder {
    width: 12px;
    height: 14px;
    margin-right: 3px;
}

.child .binder {
    margin-right: 2px;
}

.splitter {
    width: 6px;
    background: repeating-linear-gradient(#888 0 2px, #e3e2e0 2px 4px) center / 2px 34px no-repeat, #e3e2e0;
}

/* Tables */
.grid-box {
    flex: 1;
    display: flex;
    flex-direction: column;
    min-width: 0;
    min-height: 0;
    border: 1px solid #8a8a8a;
    background: #fbfbf9;
}

.group-bar {
    display: flex;
    align-items: center;
    height: 27px;
    padding-left: 16px;
    background: #e3e2e0;
}

.chip {
    display: flex;
    align-items: center;
    gap: 8px;
    height: 16px;
    padding: 0 3px 0 5px;
    background: linear-gradient(#dcdbd9, #c6c5c3);
}

.chip svg {
    width: 8px;
    height: 5px;
}

.grid-body {
    flex: 1;
    min-height: 0;
    overflow: hidden;
}

.grid {
    table-layout: fixed;
    border-spacing: 0;
}

.tasks-grid { width: 1102px; }
.open-grid { width: 1159px; }
.check-grid { width: 1111px; }
.info-grid { width: 1059px; }

.c44 { width: 44px; }
.c55 { width: 55px; }
.c72 { width: 72px; }
.c75 { width: 75px; }
.c76 { width: 76px; }
.c96 { width: 96px; }
.c99 { width: 99px; }
.c103 { width: 103px; }
.c110 { width: 110px; }
.c117 { width: 117px; }
.c122 { width: 122px; }
.c137 { width: 137px; }
.c188 { width: 188px; }
.c600 { width: 600px; }
.c699 { width: 699px; }

.grid th {
    height: 20px;
    padding: 0;
    border: 1px solid #8a8a8a;
    border-left: none;
    background: linear-gradient(#fbfbfb, #e3e2e0);
    font-weight: normal;
    text-align: center;
    white-space: nowrap;
}

.check-grid th {
    border-top: none;
}

.grid .sorted {
    background: linear-gradient(#d9d8d7, #bdbcba);
}

.sorted svg {
    display: inline-block;
    width: 8px;
    height: 5px;
    margin: 0 0 1px 8px;
}

.grid td {
    height: 20px;
    padding: 0 4px;
    white-space: nowrap;
}

.grid .group td {
    padding-top: 3px;
    padding-left: 11px;
    border-bottom: 1px solid #c8c7c6;
}

.group svg {
    display: inline-block;
    width: 6px;
    height: 10px;
    margin-right: 9px;
    vertical-align: -1px;
}

.grid .selected td {
    background: #c8c7c6;
}

.grid .filter td {
    height: 19px;
    padding-left: 1px;
    background: #edf9f9;
    color: #34700c;
    font-family: "DejaVu Sans", sans-serif;
}

.grid .indent td:first-child {
    padding-left: 24px;
}

.filter svg {
    width: 10px;
    height: 6px;
    margin-left: 3px;
}

.grid .entry td {
    height: 18px;
}

.entry svg {
    display: inline-block;
    width: 14px;
    height: 16px;
    margin-left: -1px;
    vertical-align: middle;
}

.scrollbar {
    display: flex;
    align-items: flex-start;
    height: 17px;
    padding: 0 4px;
    background: #efefef;
}

.scrollbar svg {
    width: 9px;
    height: 15px;
}

.track {
    flex: 1;
    height: 15px;
    margin: 0 4px;
}

.thumb {
    width: 30%;
    height: 15px;
    background: #cbcbcb;
}

.thumb-open { width: 28%; }
.thumb-tree { width: 76%; }

/* Status bar */
.status {
    display: flex;
    align-items: center;
    gap: 18px;
    height: 22px;
    padding-left: 4px;
    font-family: "Open Sans", "Noto Sans", sans-serif;
}

/* Taskbar */
.taskbar {
    display: flex;
    gap: 1px;
    height: 40px;
    background: #000308;
    color: #fff;
    font-family: "Open Sans", "Noto Sans", sans-serif;
}

.start {
    display: flex;
    margin-right: 1px;
}

.task {
    display: flex;
    align-items: center;
    justify-content: center;
    position: relative;
    width: 48px;
    height: 40px;
}

.task svg {
    width: 24px;
    height: 24px;
}

.running::after {
    content: "";
    position: absolute;
    right: 4px;
    bottom: 0;
    left: 4px;
    height: 2px;
    background: #76b9ed;
}

.current-app {
    background: #35373b;
}

.current-app::after {
    right: 0;
    left: 0;
}

.teams {
    border-bottom: 2px solid #ff7a12;
    background: #9c541d;
}

.badge, .count {
    position: absolute;
    right: 9px;
    bottom: 3px;
    width: 17px;
    height: 17px;
    border-radius: 50%;
    background: #cc2a1f;
    color: #fff;
    line-height: 16px;
    text-align: center;
}

.tray {
    display: flex;
    align-items: center;
    gap: 8px;
    margin-left: auto;
    margin-right: 4px;
    padding-right: 13px;
    border-right: 1px solid #555;
}

.tray svg {
    width: 16px;
    height: 16px;
}

.clock {
    display: flex;
    flex-direction: column;
    align-items: center;
    width: 56px;
    margin-right: 8px;
    line-height: 18px;
}

.notes {
    position: relative;
    width: 24px;
    height: 24px;
}

.count {
    right: -2px;
    bottom: -3px;
    border: 1px solid #777;
    background: #3c3c3c;
    line-height: 14px;
}

/* Activation notice of the system, lies over the window */
.watermark {
    position: absolute;
    right: 76px;
    bottom: 89px;
    color: #bcbcbb;
    font-family: "Open Sans", "Noto Sans", sans-serif;
    font-size: 14px;
    line-height: 20px;
}

.watermark-title {
    font-size: 19px;
    line-height: 26px;
}
```
